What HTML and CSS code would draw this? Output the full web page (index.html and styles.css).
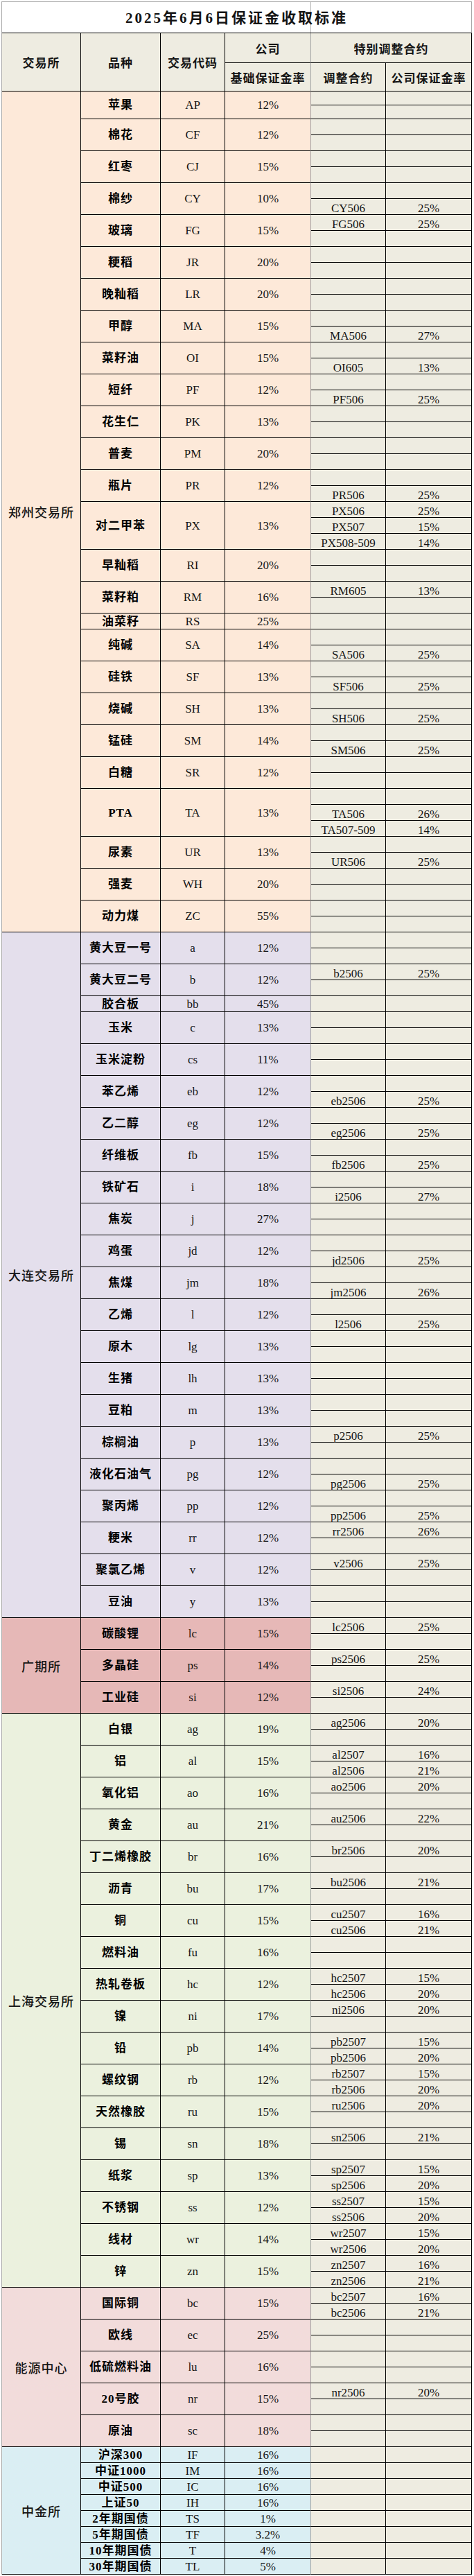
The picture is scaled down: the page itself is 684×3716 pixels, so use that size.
FILE: index.html
```html
<!DOCTYPE html>
<html lang="zh-CN">
<head>
<meta charset="utf-8">
<title>2025年6月6日保证金收取标准</title>
<link rel="stylesheet" href="styles.css">
</head>
<body>
<div class="sheet">
  <div class="title">2025年6月6日保证金收取标准</div>
  <div class="head">
    <div class="h h-ex">交易所</div>
    <div class="h h-n">品种</div>
    <div class="h h-c">交易代码</div>
    <div class="hg hg-r">
      <div class="h h-top">公司</div>
      <div class="h h-bot">基础保证金率</div>
    </div>
    <div class="hg hg-a">
      <div class="h h-top">特别调整合约</div>
      <div class="h-row">
        <div class="h h-bot h-a1">调整合约</div>
        <div class="h h-bot h-a2">公司保证金率</div>
      </div>
    </div>
  </div>

  <section class="ex zz">
    <div class="exn">郑州交易所</div>
    <div class="rows">
      <div class="p short"><div class="n">苹果</div><div class="c">AP</div><div class="r">12%</div><div class="a"><div class="s"><span></span><span></span></div><div class="s"><span></span><span></span></div></div></div>
      <div class="p"><div class="n">棉花</div><div class="c">CF</div><div class="r">12%</div><div class="a"><div class="s"><span></span><span></span></div><div class="s"><span></span><span></span></div></div></div>
      <div class="p"><div class="n">红枣</div><div class="c">CJ</div><div class="r">15%</div><div class="a"><div class="s"><span></span><span></span></div><div class="s"><span></span><span></span></div></div></div>
      <div class="p"><div class="n">棉纱</div><div class="c">CY</div><div class="r">10%</div><div class="a"><div class="s"><span></span><span></span></div><div class="s"><span>CY506</span><span>25%</span></div></div></div>
      <div class="p"><div class="n">玻璃</div><div class="c">FG</div><div class="r">15%</div><div class="a"><div class="s"><span>FG506</span><span>25%</span></div><div class="s"><span></span><span></span></div></div></div>
      <div class="p"><div class="n">粳稻</div><div class="c">JR</div><div class="r">20%</div><div class="a"><div class="s"><span></span><span></span></div><div class="s"><span></span><span></span></div></div></div>
      <div class="p"><div class="n">晚籼稻</div><div class="c">LR</div><div class="r">20%</div><div class="a"><div class="s"><span></span><span></span></div><div class="s"><span></span><span></span></div></div></div>
      <div class="p"><div class="n">甲醇</div><div class="c">MA</div><div class="r">15%</div><div class="a"><div class="s"><span></span><span></span></div><div class="s"><span>MA506</span><span>27%</span></div></div></div>
      <div class="p"><div class="n">菜籽油</div><div class="c">OI</div><div class="r">15%</div><div class="a"><div class="s"><span></span><span></span></div><div class="s"><span>OI605</span><span>13%</span></div></div></div>
      <div class="p"><div class="n">短纤</div><div class="c">PF</div><div class="r">12%</div><div class="a"><div class="s"><span></span><span></span></div><div class="s"><span>PF506</span><span>25%</span></div></div></div>
      <div class="p"><div class="n">花生仁</div><div class="c">PK</div><div class="r">13%</div><div class="a"><div class="s"><span></span><span></span></div><div class="s"><span></span><span></span></div></div></div>
      <div class="p"><div class="n">普麦</div><div class="c">PM</div><div class="r">20%</div><div class="a"><div class="s"><span></span><span></span></div><div class="s"><span></span><span></span></div></div></div>
      <div class="p"><div class="n">瓶片</div><div class="c">PR</div><div class="r">12%</div><div class="a"><div class="s"><span></span><span></span></div><div class="s"><span>PR506</span><span>25%</span></div></div></div>
      <div class="p"><div class="n">对二甲苯</div><div class="c">PX</div><div class="r">13%</div><div class="a"><div class="s"><span>PX506</span><span>25%</span></div><div class="s"><span>PX507</span><span>15%</span></div><div class="s"><span>PX508-509</span><span>14%</span></div></div></div>
      <div class="p"><div class="n">早籼稻</div><div class="c">RI</div><div class="r">20%</div><div class="a"><div class="s"><span></span><span></span></div><div class="s"><span></span><span></span></div></div></div>
      <div class="p"><div class="n">菜籽粕</div><div class="c">RM</div><div class="r">16%</div><div class="a"><div class="s"><span>RM605</span><span>13%</span></div><div class="s"><span></span><span></span></div></div></div>
      <div class="p"><div class="n">油菜籽</div><div class="c">RS</div><div class="r">25%</div><div class="a"><div class="s"><span></span><span></span></div></div></div>
      <div class="p"><div class="n">纯碱</div><div class="c">SA</div><div class="r">14%</div><div class="a"><div class="s"><span></span><span></span></div><div class="s"><span>SA506</span><span>25%</span></div></div></div>
      <div class="p"><div class="n">硅铁</div><div class="c">SF</div><div class="r">13%</div><div class="a"><div class="s"><span></span><span></span></div><div class="s"><span>SF506</span><span>25%</span></div></div></div>
      <div class="p"><div class="n">烧碱</div><div class="c">SH</div><div class="r">13%</div><div class="a"><div class="s"><span></span><span></span></div><div class="s"><span>SH506</span><span>25%</span></div></div></div>
      <div class="p"><div class="n">锰硅</div><div class="c">SM</div><div class="r">14%</div><div class="a"><div class="s"><span></span><span></span></div><div class="s"><span>SM506</span><span>25%</span></div></div></div>
      <div class="p"><div class="n">白糖</div><div class="c">SR</div><div class="r">12%</div><div class="a"><div class="s"><span></span><span></span></div><div class="s"><span></span><span></span></div></div></div>
      <div class="p"><div class="n">PTA</div><div class="c">TA</div><div class="r">13%</div><div class="a"><div class="s"><span></span><span></span></div><div class="s"><span>TA506</span><span>26%</span></div><div class="s"><span>TA507-509</span><span>14%</span></div></div></div>
      <div class="p"><div class="n">尿素</div><div class="c">UR</div><div class="r">13%</div><div class="a"><div class="s"><span></span><span></span></div><div class="s"><span>UR506</span><span>25%</span></div></div></div>
      <div class="p"><div class="n">强麦</div><div class="c">WH</div><div class="r">20%</div><div class="a"><div class="s"><span></span><span></span></div><div class="s"><span></span><span></span></div></div></div>
      <div class="p"><div class="n">动力煤</div><div class="c">ZC</div><div class="r">55%</div><div class="a"><div class="s"><span></span><span></span></div><div class="s"><span></span><span></span></div></div></div>
    </div>
  </section>

  <section class="ex dl">
    <div class="exn">大连交易所</div>
    <div class="rows">
      <div class="p"><div class="n">黄大豆一号</div><div class="c">a</div><div class="r">12%</div><div class="a"><div class="s"><span></span><span></span></div><div class="s"><span></span><span></span></div></div></div>
      <div class="p"><div class="n">黄大豆二号</div><div class="c">b</div><div class="r">12%</div><div class="a"><div class="s"><span>b2506</span><span>25%</span></div><div class="s"><span></span><span></span></div></div></div>
      <div class="p"><div class="n">胶合板</div><div class="c">bb</div><div class="r">45%</div><div class="a"><div class="s"><span></span><span></span></div></div></div>
      <div class="p"><div class="n">玉米</div><div class="c">c</div><div class="r">13%</div><div class="a"><div class="s"><span></span><span></span></div><div class="s"><span></span><span></span></div></div></div>
      <div class="p"><div class="n">玉米淀粉</div><div class="c">cs</div><div class="r">11%</div><div class="a"><div class="s"><span></span><span></span></div><div class="s"><span></span><span></span></div></div></div>
      <div class="p"><div class="n">苯乙烯</div><div class="c">eb</div><div class="r">12%</div><div class="a"><div class="s"><span></span><span></span></div><div class="s"><span>eb2506</span><span>25%</span></div></div></div>
      <div class="p"><div class="n">乙二醇</div><div class="c">eg</div><div class="r">12%</div><div class="a"><div class="s"><span></span><span></span></div><div class="s"><span>eg2506</span><span>25%</span></div></div></div>
      <div class="p"><div class="n">纤维板</div><div class="c">fb</div><div class="r">15%</div><div class="a"><div class="s"><span></span><span></span></div><div class="s"><span>fb2506</span><span>25%</span></div></div></div>
      <div class="p"><div class="n">铁矿石</div><div class="c">i</div><div class="r">18%</div><div class="a"><div class="s"><span></span><span></span></div><div class="s"><span>i2506</span><span>27%</span></div></div></div>
      <div class="p"><div class="n">焦炭</div><div class="c">j</div><div class="r">27%</div><div class="a"><div class="s"><span></span><span></span></div><div class="s"><span></span><span></span></div></div></div>
      <div class="p"><div class="n">鸡蛋</div><div class="c">jd</div><div class="r">12%</div><div class="a"><div class="s"><span></span><span></span></div><div class="s"><span>jd2506</span><span>25%</span></div></div></div>
      <div class="p"><div class="n">焦煤</div><div class="c">jm</div><div class="r">18%</div><div class="a"><div class="s"><span></span><span></span></div><div class="s"><span>jm2506</span><span>26%</span></div></div></div>
      <div class="p"><div class="n">乙烯</div><div class="c">l</div><div class="r">12%</div><div class="a"><div class="s"><span></span><span></span></div><div class="s"><span>l2506</span><span>25%</span></div></div></div>
      <div class="p"><div class="n">原木</div><div class="c">lg</div><div class="r">13%</div><div class="a"><div class="s"><span></span><span></span></div><div class="s"><span></span><span></span></div></div></div>
      <div class="p"><div class="n">生猪</div><div class="c">lh</div><div class="r">13%</div><div class="a"><div class="s"><span></span><span></span></div><div class="s"><span></span><span></span></div></div></div>
      <div class="p"><div class="n">豆粕</div><div class="c">m</div><div class="r">13%</div><div class="a"><div class="s"><span></span><span></span></div><div class="s"><span></span><span></span></div></div></div>
      <div class="p"><div class="n">棕榈油</div><div class="c">p</div><div class="r">13%</div><div class="a"><div class="s"><span>p2506</span><span>25%</span></div><div class="s"><span></span><span></span></div></div></div>
      <div class="p"><div class="n">液化石油气</div><div class="c">pg</div><div class="r">12%</div><div class="a"><div class="s"><span></span><span></span></div><div class="s"><span>pg2506</span><span>25%</span></div></div></div>
      <div class="p"><div class="n">聚丙烯</div><div class="c">pp</div><div class="r">12%</div><div class="a"><div class="s"><span></span><span></span></div><div class="s"><span>pp2506</span><span>25%</span></div></div></div>
      <div class="p"><div class="n">粳米</div><div class="c">rr</div><div class="r">12%</div><div class="a"><div class="s"><span>rr2506</span><span>26%</span></div><div class="s"><span></span><span></span></div></div></div>
      <div class="p"><div class="n">聚氯乙烯</div><div class="c">v</div><div class="r">12%</div><div class="a"><div class="s"><span>v2506</span><span>25%</span></div><div class="s"><span></span><span></span></div></div></div>
      <div class="p"><div class="n">豆油</div><div class="c">y</div><div class="r">13%</div><div class="a"><div class="s"><span></span><span></span></div><div class="s"><span></span><span></span></div></div></div>
    </div>
  </section>

  <section class="ex gq">
    <div class="exn">广期所</div>
    <div class="rows">
      <div class="p"><div class="n">碳酸锂</div><div class="c">lc</div><div class="r">15%</div><div class="a"><div class="s"><span>lc2506</span><span>25%</span></div><div class="s"><span></span><span></span></div></div></div>
      <div class="p"><div class="n">多晶硅</div><div class="c">ps</div><div class="r">14%</div><div class="a"><div class="s"><span>ps2506</span><span>25%</span></div><div class="s"><span></span><span></span></div></div></div>
      <div class="p"><div class="n">工业硅</div><div class="c">si</div><div class="r">12%</div><div class="a"><div class="s"><span>si2506</span><span>24%</span></div><div class="s"><span></span><span></span></div></div></div>
    </div>
  </section>

  <section class="ex sh">
    <div class="exn">上海交易所</div>
    <div class="rows">
      <div class="p"><div class="n">白银</div><div class="c">ag</div><div class="r">19%</div><div class="a"><div class="s"><span>ag2506</span><span>20%</span></div><div class="s"><span></span><span></span></div></div></div>
      <div class="p"><div class="n">铝</div><div class="c">al</div><div class="r">15%</div><div class="a"><div class="s"><span>al2507</span><span>16%</span></div><div class="s"><span>al2506</span><span>21%</span></div></div></div>
      <div class="p"><div class="n">氧化铝</div><div class="c">ao</div><div class="r">16%</div><div class="a"><div class="s"><span>ao2506</span><span>20%</span></div><div class="s"><span></span><span></span></div></div></div>
      <div class="p"><div class="n">黄金</div><div class="c">au</div><div class="r">21%</div><div class="a"><div class="s"><span>au2506</span><span>22%</span></div><div class="s"><span></span><span></span></div></div></div>
      <div class="p"><div class="n">丁二烯橡胶</div><div class="c">br</div><div class="r">16%</div><div class="a"><div class="s"><span>br2506</span><span>20%</span></div><div class="s"><span></span><span></span></div></div></div>
      <div class="p"><div class="n">沥青</div><div class="c">bu</div><div class="r">17%</div><div class="a"><div class="s"><span>bu2506</span><span>21%</span></div><div class="s"><span></span><span></span></div></div></div>
      <div class="p"><div class="n">铜</div><div class="c">cu</div><div class="r">15%</div><div class="a"><div class="s"><span>cu2507</span><span>16%</span></div><div class="s"><span>cu2506</span><span>21%</span></div></div></div>
      <div class="p"><div class="n">燃料油</div><div class="c">fu</div><div class="r">16%</div><div class="a"><div class="s"><span></span><span></span></div><div class="s"><span></span><span></span></div></div></div>
      <div class="p"><div class="n">热轧卷板</div><div class="c">hc</div><div class="r">12%</div><div class="a"><div class="s"><span>hc2507</span><span>15%</span></div><div class="s"><span>hc2506</span><span>20%</span></div></div></div>
      <div class="p"><div class="n">镍</div><div class="c">ni</div><div class="r">17%</div><div class="a"><div class="s"><span>ni2506</span><span>20%</span></div><div class="s"><span></span><span></span></div></div></div>
      <div class="p"><div class="n">铅</div><div class="c">pb</div><div class="r">14%</div><div class="a"><div class="s"><span>pb2507</span><span>15%</span></div><div class="s"><span>pb2506</span><span>20%</span></div></div></div>
      <div class="p"><div class="n">螺纹钢</div><div class="c">rb</div><div class="r">12%</div><div class="a"><div class="s"><span>rb2507</span><span>15%</span></div><div class="s"><span>rb2506</span><span>20%</span></div></div></div>
      <div class="p"><div class="n">天然橡胶</div><div class="c">ru</div><div class="r">15%</div><div class="a"><div class="s"><span>ru2506</span><span>20%</span></div><div class="s"><span></span><span></span></div></div></div>
      <div class="p"><div class="n">锡</div><div class="c">sn</div><div class="r">18%</div><div class="a"><div class="s"><span>sn2506</span><span>21%</span></div><div class="s"><span></span><span></span></div></div></div>
      <div class="p"><div class="n">纸浆</div><div class="c">sp</div><div class="r">13%</div><div class="a"><div class="s"><span>sp2507</span><span>15%</span></div><div class="s"><span>sp2506</span><span>20%</span></div></div></div>
      <div class="p"><div class="n">不锈钢</div><div class="c">ss</div><div class="r">12%</div><div class="a"><div class="s"><span>ss2507</span><span>15%</span></div><div class="s"><span>ss2506</span><span>20%</span></div></div></div>
      <div class="p"><div class="n">线材</div><div class="c">wr</div><div class="r">14%</div><div class="a"><div class="s"><span>wr2507</span><span>15%</span></div><div class="s"><span>wr2506</span><span>20%</span></div></div></div>
      <div class="p"><div class="n">锌</div><div class="c">zn</div><div class="r">15%</div><div class="a"><div class="s"><span>zn2507</span><span>16%</span></div><div class="s"><span>zn2506</span><span>21%</span></div></div></div>
    </div>
  </section>

  <section class="ex ny">
    <div class="exn">能源中心</div>
    <div class="rows">
      <div class="p"><div class="n">国际铜</div><div class="c">bc</div><div class="r">15%</div><div class="a"><div class="s"><span>bc2507</span><span>16%</span></div><div class="s"><span>bc2506</span><span>21%</span></div></div></div>
      <div class="p"><div class="n">欧线</div><div class="c">ec</div><div class="r">25%</div><div class="a"><div class="s"><span></span><span></span></div><div class="s"><span></span><span></span></div></div></div>
      <div class="p"><div class="n">低硫燃料油</div><div class="c">lu</div><div class="r">16%</div><div class="a"><div class="s"><span></span><span></span></div><div class="s"><span></span><span></span></div></div></div>
      <div class="p"><div class="n">20号胶</div><div class="c">nr</div><div class="r">15%</div><div class="a"><div class="s"><span>nr2506</span><span>20%</span></div><div class="s"><span></span><span></span></div></div></div>
      <div class="p"><div class="n">原油</div><div class="c">sc</div><div class="r">18%</div><div class="a"><div class="s"><span></span><span></span></div><div class="s"><span></span><span></span></div></div></div>
    </div>
  </section>

  <section class="ex zj">
    <div class="exn">中金所</div>
    <div class="rows">
      <div class="p"><div class="n">沪深300</div><div class="c">IF</div><div class="r">16%</div><div class="a"><div class="s"><span></span><span></span></div></div></div>
      <div class="p"><div class="n">中证1000</div><div class="c">IM</div><div class="r">16%</div><div class="a"><div class="s"><span></span><span></span></div></div></div>
      <div class="p"><div class="n">中证500</div><div class="c">IC</div><div class="r">16%</div><div class="a"><div class="s"><span></span><span></span></div></div></div>
      <div class="p"><div class="n">上证50</div><div class="c">IH</div><div class="r">16%</div><div class="a"><div class="s"><span></span><span></span></div></div></div>
      <div class="p"><div class="n">2年期国债</div><div class="c">TS</div><div class="r">1%</div><div class="a"><div class="s"><span></span><span></span></div></div></div>
      <div class="p"><div class="n">5年期国债</div><div class="c">TF</div><div class="r">3.2%</div><div class="a"><div class="s"><span></span><span></span></div></div></div>
      <div class="p"><div class="n">10年期国债</div><div class="c">T</div><div class="r">4%</div><div class="a"><div class="s"><span></span><span></span></div></div></div>
      <div class="p"><div class="n">30年期国债</div><div class="c">TL</div><div class="r">5%</div><div class="a"><div class="s"><span></span><span></span></div></div></div>
    </div>
  </section>
</div>
</body>
</html>
```
FILE: styles.css
```css
* {
  box-sizing: border-box;
}

html, body {
  margin: 0;
  padding: 0;
  background: #ffffff;
}

.sheet {
  margin: 2px 0 0 2px;
  width: 679px;
  border-left: 1px solid #a8a8a8;
  border-top: 1px solid #a8a8a8;
  font-family: "Liberation Serif", "Noto Sans CJK SC", serif;
  color: #151515;
}

/* title */
.title {
  height: 45px;
  padding-top: 2px;
  border-bottom: 1px solid #000;
  border-right: 1px solid #a8a8a8;
  display: flex;
  align-items: center;
  justify-content: center;
  font-family: "Liberation Serif", "Noto Sans CJK SC", serif;
  font-weight: 700;
  font-size: 21px;
  line-height: 1;
  letter-spacing: 3px;
  background: linear-gradient(to right, transparent 445px, #b0b0b0 445px, #b0b0b0 446px, transparent 446px), #ffffff;
}

/* header */
.head {
  display: flex;
  height: 84px;
  background: #eeece1;
}

.h {
  display: flex;
  align-items: center;
  justify-content: center;
  border-right: 1px solid #000;
  border-bottom: 1px solid #000;
  font-family: "Noto Sans CJK SC", sans-serif;
  font-weight: 700;
  font-size: 17px;
  line-height: 1;
  letter-spacing: 1px;
  white-space: nowrap;
}

.h-ex { width: 114px; }
.h-n { width: 115px; }
.h-c { width: 93px; }

.hg {
  display: flex;
  flex-direction: column;
}

.hg-r { width: 124px; }
.hg-r .h { border-right-color: #a0a0a0; }
.hg-a { width: 232px; }

.h-top { height: 43px; }
.h-bot { height: 41px; }

.h-row {
  display: flex;
}

.h-a1 { width: 108px; }
.h-a2 { width: 124px; }

/* sections */
.ex {
  display: flex;
}

.zz { background: #fde9d9; }
.dl { background: #e4dfec; }
.gq { background: #e6b8b7; }
.sh { background: #ebf1de; }
.ny { background: #f2dcdb; }
.zj { background: #daeef3; }

.exn {
  width: 114px;
  flex: none;
  display: flex;
  align-items: center;
  justify-content: center;
  border-right: 1px solid #000;
  border-bottom: 1px solid #000;
  font-family: "Noto Sans CJK SC", sans-serif;
  font-weight: 500;
  font-size: 18px;
  line-height: 1;
  letter-spacing: 1px;
}

.rows {
  display: flex;
  flex-direction: column;
}

.p {
  display: flex;
}

.n, .c, .r {
  display: flex;
  align-items: center;
  justify-content: center;
  border-right: 1px solid #000;
  border-bottom: 1px solid #000;
  line-height: 1;
  white-space: nowrap;
}

.n {
  width: 115px;
  font-family: "Liberation Serif", "Noto Sans CJK SC", serif;
  font-weight: 700;
  font-size: 17px;
  letter-spacing: 1px;
  color: #000;
}

.c {
  width: 93px;
  font-size: 17px;
}

.r {
  width: 124px;
  font-size: 17px;
  border-right-color: #a0a0a0;
}

.a {
  background: #eeece1;
}

.s {
  display: flex;
  height: 23px;
}

.short .s {
  height: 20px;
}

.s span {
  display: flex;
  align-items: flex-end;
  justify-content: center;
  border-right: 1px solid #000;
  border-bottom: 1px solid #000;
  font-size: 17px;
  line-height: 1;
  white-space: nowrap;
}

.s span:first-child { width: 108px; }
.s span:last-child { width: 124px; }
```
